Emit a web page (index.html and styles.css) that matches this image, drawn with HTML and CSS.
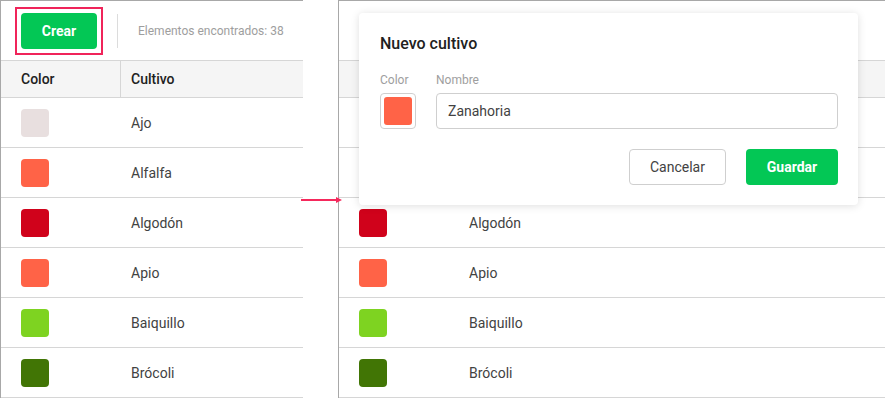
FILE: index.html
```html
<!DOCTYPE html>
<html lang="es">
<head>
    <meta charset="UTF-8">
    <meta name="viewport" content="width=device-width, initial-scale=1.0">
    <title>Cultivos</title>
    <link rel="stylesheet" href="styles.css">
</head>
<body>
    <div class="scene">

        <section class="panel panel-left">
            <div class="toolbar">
                <span class="marker"><button class="btn btn-green">Crear</button></span>
                <span class="divider"></span>
                <span class="count">Elementos encontrados: 38</span>
            </div>
            <div class="table">
                <div class="row head">
                    <div class="cell cell-color">Color</div>
                    <div class="cell cell-name">Cultivo</div>
                </div>
                <div class="row">
                    <div class="cell cell-color"><span class="swatch" style="background:#e8dfdf"></span></div>
                    <div class="cell cell-name">Ajo</div>
                </div>
                <div class="row">
                    <div class="cell cell-color"><span class="swatch" style="background:#ff6347"></span></div>
                    <div class="cell cell-name">Alfalfa</div>
                </div>
                <div class="row">
                    <div class="cell cell-color"><span class="swatch" style="background:#d0021b"></span></div>
                    <div class="cell cell-name">Algodón</div>
                </div>
                <div class="row">
                    <div class="cell cell-color"><span class="swatch" style="background:#ff6347"></span></div>
                    <div class="cell cell-name">Apio</div>
                </div>
                <div class="row">
                    <div class="cell cell-color"><span class="swatch" style="background:#7ed321"></span></div>
                    <div class="cell cell-name">Baiquillo</div>
                </div>
                <div class="row">
                    <div class="cell cell-color"><span class="swatch" style="background:#417505"></span></div>
                    <div class="cell cell-name">Brócoli</div>
                </div>
            </div>
        </section>

        <section class="panel panel-right">
            <!-- lo de arriba queda tapado por el modal -->
            <div class="toolbar"></div>
            <div class="table">
                <div class="row head">
                    <div class="cell cell-color"></div>
                    <div class="cell cell-name"></div>
                </div>
                <div class="row"></div>
                <div class="row"></div>
                <div class="row">
                    <div class="cell cell-color"><span class="swatch" style="background:#d0021b"></span></div>
                    <div class="cell cell-name">Algodón</div>
                </div>
                <div class="row">
                    <div class="cell cell-color"><span class="swatch" style="background:#ff6347"></span></div>
                    <div class="cell cell-name">Apio</div>
                </div>
                <div class="row">
                    <div class="cell cell-color"><span class="swatch" style="background:#7ed321"></span></div>
                    <div class="cell cell-name">Baiquillo</div>
                </div>
                <div class="row">
                    <div class="cell cell-color"><span class="swatch" style="background:#417505"></span></div>
                    <div class="cell cell-name">Brócoli</div>
                </div>
            </div>

            <div class="modal">
                <h3 class="modal-title">Nuevo cultivo</h3>
                <div class="fields">
                    <div class="field">
                        <label>Color</label>
                        <div class="color-box"><span class="color-fill"></span></div>
                    </div>
                    <div class="field field-grow">
                        <label for="nombre">Nombre</label>
                        <input type="text" id="nombre" value="Zanahoria">
                    </div>
                </div>
                <div class="actions">
                    <button class="btn btn-outline">Cancelar</button>
                    <button class="btn btn-green btn-save">Guardar</button>
                </div>
            </div>
        </section>

        <svg class="arrow" width="42" height="8" viewBox="0 0 42 8">
            <line x1="0" y1="4" x2="37" y2="4" stroke="#f5295c" stroke-width="2"/>
            <polygon points="35,1 41,4 35,7" fill="#f5295c"/>
        </svg>
    </div>
</body>
</html>
```

FILE: styles.css
```css
* {
    box-sizing: border-box;
}
body {
    margin: 0;
    background: #fff;
    font-family: Roboto, "Liberation Sans", Arial, sans-serif;
    font-size: 14px;
    color: #424242;
}
.scene {
    position: relative;
    display: flex;
    gap: 35px;
    height: 398px;
    overflow: hidden;
}
.panel {
    position: relative;
    border-top: 1px solid #a8a8a8;
    border-left: 1px solid #a8a8a8;
}
.panel-left {
    width: 303px;
    flex: none;
}
.panel-right {
    flex: 1;
}
.toolbar {
    height: 59px;
    display: flex;
    align-items: center;
    padding-left: 20px;
}
.marker {
    display: flex;
    margin: -6px;
    padding: 4px;
    border: 2px solid #f0245a;
}
.divider {
    width: 1px;
    height: 34px;
    background: #dcdcdc;
    margin: 0 20px;
}
.count {
    font-size: 12px;
    color: #9e9e9e;
}
.btn {
    font-family: inherit;
    font-size: 14px;
    height: 36px;
    border-radius: 4px;
    cursor: pointer;
}
.btn-green {
    width: 76px;
    border: none;
    background: #03c755;
    color: #fff;
    font-weight: bold;
}
.btn-outline {
    width: 97px;
    background: #fff;
    border: 1px solid #cfcfcf;
    color: #424242;
}
.btn-save {
    width: 92px;
}
.row {
    display: flex;
    height: 50px;
    border-bottom: 1px solid #d6d6d6;
}
.row.head {
    height: 38px;
    background: #f5f5f5;
    border-top: 1px solid #d6d6d6;
    color: #212121;
    font-weight: 500;
}
.cell {
    display: flex;
    align-items: center;
}
.cell-color {
    width: 119px;
    padding-left: 20px;
}
.cell-name {
    flex: 1;
    padding-left: 11px;
}
.head .cell-name {
    border-left: 1px solid #d6d6d6;
    padding-left: 10px;
}
.swatch {
    display: block;
    width: 28px;
    height: 28px;
    border-radius: 4px;
}
.modal {
    position: absolute;
    top: 12px;
    left: 20px;
    width: 499px;
    background: #fff;
    border-radius: 4px;
    box-shadow: 0 1px 8px rgba(0, 0, 0, 0.13);
    padding: 21px 20px 20px 21px;
}
.modal-title {
    margin: 0;
    font-size: 16px;
    line-height: 20px;
    font-weight: 500;
    color: #212121;
}
.fields {
    display: flex;
    gap: 20px;
    margin-top: 19px;
}
.field label {
    display: block;
    font-size: 12px;
    line-height: 14px;
    color: #9e9e9e;
    margin-bottom: 6px;
}
.field-grow {
    flex: 1;
}
.color-box {
    width: 36px;
    height: 36px;
    border: 1px solid #cfcfcf;
    border-radius: 4px;
    padding: 3px;
}
.color-fill {
    display: block;
    width: 28px;
    height: 28px;
    border-radius: 3px;
    background: #ff6347;
}
.field input {
    width: 100%;
    height: 36px;
    border: 1px solid #cfcfcf;
    border-radius: 4px;
    padding: 0 11px;
    font-family: inherit;
    font-size: 14px;
    color: #424242;
}
.actions {
    display: flex;
    justify-content: flex-end;
    gap: 20px;
    margin-top: 20px;
}
.arrow {
    position: absolute;
    left: 301px;
    top: 196px;
}
```
